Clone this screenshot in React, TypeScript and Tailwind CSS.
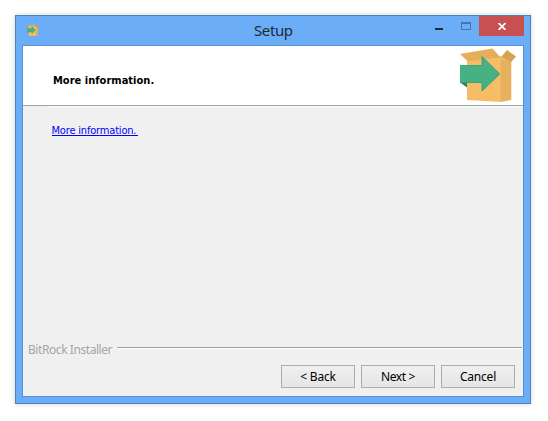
import React from 'react';

function BoxIcon({ className }: { className: string }) {
  return (
    <svg className={className} viewBox="0 0 56 56" fill="none">
      <path d="M7 12 L41 8 V54 L7 52 Z" fill="#f5be66" />
      <path d="M40.7 10 L51.3 14 V52 L40.7 54 Z" fill="#e6b05c" />
      <path d="M0 6 L32.5 0.5 L40.7 9.5 L7.5 13.3 Z" fill="#e5ae5a" />
      <path d="M47 2 L56 8.5 L51 14.3 L40.7 9.5 Z" fill="#d8a350" />
      <path d="M0 34.5 H7 V39.5 Z" fill="#258a64" />
      <path d="M0 17.5 H22 V8.5 L39.8 26 L22 43 V34.5 H0 Z" fill="#48b184" />
      <path d="M0 17.5 H22 V8.5 L39.8 26 L22 43 V34.5 H0" stroke="#16a27a" strokeWidth="0.8" />
    </svg>
  );
}

function WizardButton({ label, spacing }: { label: string; spacing: string }) {
  return (
    <button className="flex h-[23px] w-[74px] items-center justify-center border border-[#acacac] bg-linear-to-b from-[#f0f0f0] to-[#e5e5e5] font-['Noto_Sans',sans-serif] text-[12px] leading-[21px] text-black">
      <span className={`whitespace-pre ${spacing}`}>{label}</span>
    </button>
  );
}

function TitleBar() {
  return (
    <div className="flex h-[29px] items-start">
      <BoxIcon className="mt-[8px] ml-[11px] h-[13px] w-[12px] shrink-0" />
      <div className="grow pl-[215px] font-['Noto_Sans',sans-serif] text-[15px] leading-[29px] tracking-[-0.4px] text-[#202a36]">Setup</div>
      <svg className="h-[20px] w-[48px] shrink-0" viewBox="0 0 48 20" shapeRendering="crispEdges">
        <rect x="4" y="12" width="8" height="2" fill="#222b35" />
        <path d="M30 6 H40 V14 H30 Z M31 8 V13 H39 V8 Z" fill="#4a72a3" fillRule="evenodd" />
      </svg>
      <button className="mr-[6px] flex h-[20px] w-[45px] shrink-0 items-center justify-center bg-[#c75050] pt-px">
        <svg className="h-[7px] w-[8px]" viewBox="0 0 8 7">
          <path d="M0.5 0 L7.5 7 M7.5 0 L0.5 7" stroke="white" strokeWidth="1.7" />
        </svg>
      </button>
    </div>
  );
}

export default function App() {
  return (
    <div className="h-[421px] w-[548px] overflow-hidden bg-white pt-[15px] pl-[15px]">
      <div className="flex h-[389px] w-[516px] flex-col border border-[#4b83bd] bg-[#6badf6] shadow-[0_0_5px_rgba(0,0,0,0.18)]">
        <TitleBar />
        <div className="mx-[6px] flex h-[352px] flex-col border border-[#5692d0] bg-[#f0f0f0]">
          <header className="flex h-[60px] shrink-0 items-start justify-between border-b border-[#a0a0a0] bg-white pr-[7px] pl-[30px]">
            <h1 className="pt-[27px] font-['DejaVu_Sans_Condensed','DejaVu_Sans',sans-serif] text-[11px] leading-[16px] font-bold tracking-[0.02px] text-black">More information.</h1>
            <BoxIcon className="mt-[2px] h-[56px] w-[56px]" />
          </header>
          <div className="ml-[25px] h-px shrink-0 bg-white" />
          <main className="grow pt-[15px] pl-[28.5px]">
            <a href="#" className="block h-[14px] w-[86px] border-b border-[#0000ff] font-['DejaVu_Sans_Condensed','DejaVu_Sans',sans-serif] text-[11px] leading-[17px] tracking-[-0.18px] whitespace-nowrap text-[#0000ff]">More information.</a>
          </main>
          <footer className="h-[54px] shrink-0">
            <div className="flex h-[18px] items-start pl-[5px]">
              <span className="w-[89px] shrink-0 font-['Noto_Sans',sans-serif] text-[12px] leading-[15px] tracking-[-0.43px] whitespace-nowrap text-[#a5a5a5]">BitRock Installer</span>
              <div className="mt-[5px] mr-px h-[2px] grow border-b border-white bg-[#a0a0a0]" />
            </div>
            <div className="flex justify-end gap-[6px] pt-[5px] pr-[8px]">
              <WizardButton label="< Back" spacing="tracking-[-0.2px]" />
              <WizardButton label="Next >" spacing="tracking-[-0.35px]" />
              <WizardButton label="Cancel" spacing="tracking-[-0.2px]" />
            </div>
          </footer>
        </div>
      </div>
    </div>
  );
}
